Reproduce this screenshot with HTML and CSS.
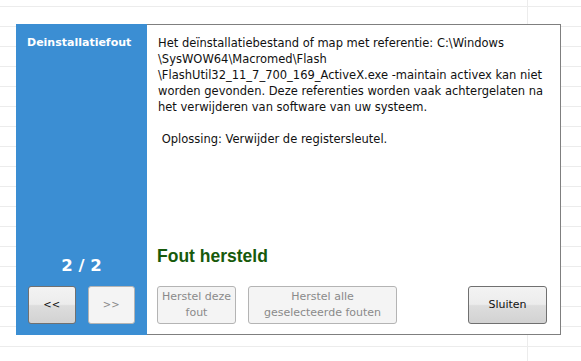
FILE: index.html
```html
<!DOCTYPE html>
<html lang="nl">
<head>
<meta charset="utf-8">
<title>Deïnstallatiefout</title>
<link rel="stylesheet" href="styles.css">
</head>
<body>
<div class="dialog">
  <aside class="side">
    <div class="side-title">Deinstallatiefout</div>
    <div class="counter">2 / 2</div>
    <div class="nav">
      <button class="btn nav-btn">&lt;&lt;</button>
      <button class="btn nav-btn" disabled>&gt;&gt;</button>
    </div>
  </aside>
  <main class="main">
    <p class="message">Het deïnstallatiebestand of map met referentie: C:\Windows<br>\SysWOW64\Macromed\Flash<br>\FlashUtil32_11_7_700_169_ActiveX.exe -maintain activex kan niet<br>worden gevonden. Deze referenties worden vaak achtergelaten na<br>het verwijderen van software van uw systeem.</p>
    <p class="message solution">&nbsp;Oplossing: Verwijder de registersleutel.</p>
    <div class="status">Fout hersteld</div>
    <div class="actions">
      <button class="btn fix-one" disabled>Herstel deze<br>fout</button>
      <button class="btn fix-all" disabled>Herstel alle<br>geselecteerde fouten</button>
      <button class="btn close">Sluiten</button>
    </div>
  </main>
</div>
</body>
</html>
```

FILE: styles.css
```css
html, body {
  margin: 0;
  padding: 0;
}

body {
  width: 581px;
  height: 361px;
  overflow: hidden;
  font-family: "DejaVu Sans", Verdana, sans-serif;
  background-color: #ffffff;
  background-image:
    linear-gradient(to right, transparent 527px, #ececec 527px, #ececec 528px, transparent 528px),
    repeating-linear-gradient(to bottom, transparent 0, transparent 6px, #ececec 6px, #ececec 7px, transparent 7px, transparent 20px);
}

.dialog {
  display: flex;
  margin: 24px 0 0 16px;
  width: 545px;
  height: 311px;
}

.side {
  width: 131px;
  flex: none;
  background: #3b8ed3;
  color: #ffffff;
  display: flex;
  flex-direction: column;
  padding: 11px 12px 11px 10px;
  box-sizing: border-box;
}

.side-title {
  font-weight: bold;
  font-size: 11px;
  line-height: 16px;
  padding-left: 1px;
}

.counter {
  margin-top: auto;
  font-weight: bold;
  font-size: 16.5px;
  line-height: 20px;
  text-align: center;
  padding-left: 2px;
}

.nav {
  display: flex;
  gap: 12px;
  margin-top: 10px;
  padding-left: 2px;
}

.btn {
  font-family: "DejaVu Sans", Verdana, sans-serif;
  font-size: 11px;
  line-height: 16px;
  height: 38px;
  padding: 0;
  border: 1px solid #707070;
  border-radius: 3px;
  color: #111111;
  background: linear-gradient(to bottom, #f3f3f3 0%, #ececec 48%, #dddddd 52%, #d2d2d2 100%);
  box-sizing: border-box;
}

.btn:disabled {
  border-color: #b4b4b4;
  color: #8a8a8a;
  background: #f4f4f4;
}

.nav-btn {
  width: 48px;
  font-size: 10px;
}

.main {
  flex: 1;
  display: flex;
  flex-direction: column;
  background: #ffffff;
  border: 1px solid #7f7f7f;
  border-left: none;
  padding: 10px 13px 10px 10px;
  box-sizing: border-box;
}

.message {
  margin: 0 0 0 1px;
  font-size: 11.5px;
  line-height: 16px;
  color: #111111;
  white-space: nowrap;
}

.solution {
  margin-top: 16px;
}

.status {
  margin-top: auto;
  margin-bottom: 20px;
  font-family: "Liberation Sans", Arial, sans-serif;
  font-weight: bold;
  font-size: 17.5px;
  line-height: 20px;
  color: #175a0b;
}

.actions {
  display: flex;
  gap: 12px;
}

.fix-one {
  width: 79px;
}

.fix-all {
  width: 149px;
}

.close {
  width: 79px;
  margin-left: auto;
}
```
